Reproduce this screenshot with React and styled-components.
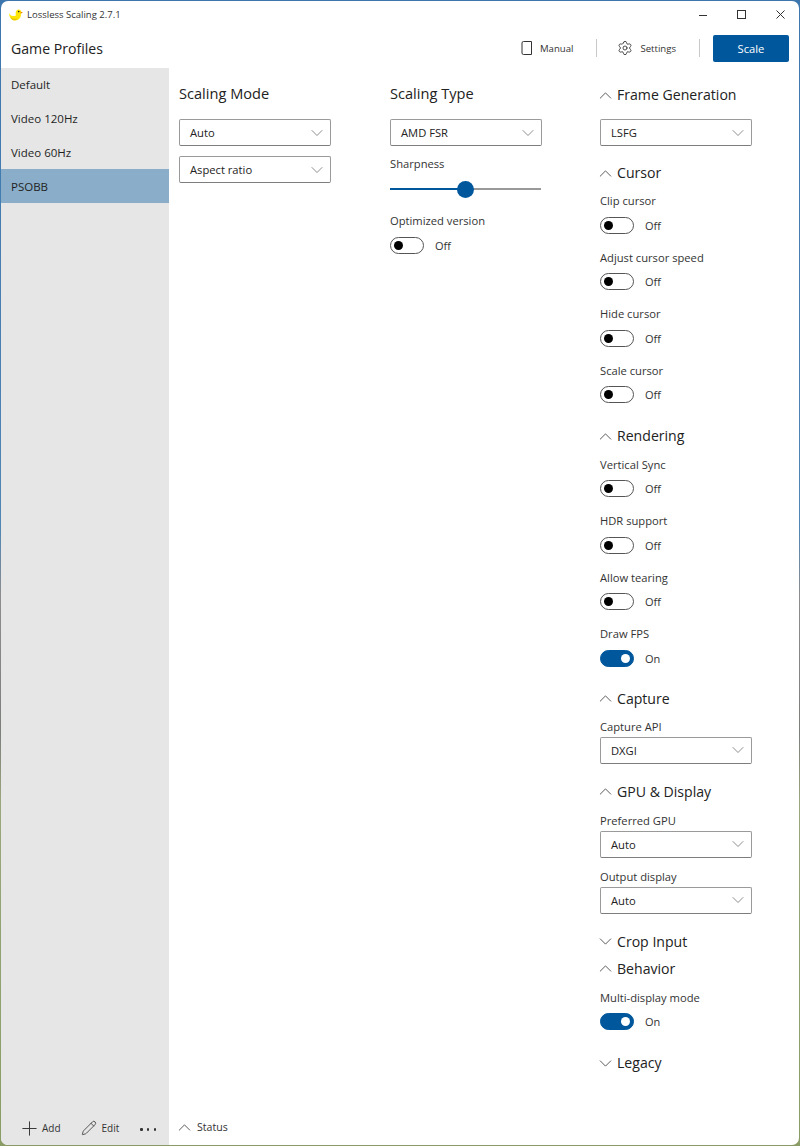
import React from "react";
import styled, { createGlobalStyle } from "styled-components";
import { ChevronDown, ChevronUp, Plus, Pencil, Settings as Gear } from "lucide-react";

const Global = createGlobalStyle`
  html, body { margin: 0; padding: 0; background: #fff; }
  * { box-sizing: border-box; }
`;
const Desktop = styled.div`
  width: 800px;
  height: 1146px;
  padding: 1px;
  background: linear-gradient(#3c76ad 0%, #4f86b5 46%, #8d8d8f 52%, #7d7f7c 64%, #9aa77c 70%, #8a9c66 100%);
`;
const Window = styled.div`
  width: 100%;
  height: 100%;
  background: #fff;
  border-radius: 7px;
  overflow: hidden;
  display: flex;
  flex-direction: column;
  font-family: "Open Sans", "Noto Sans", sans-serif;
  color: #1f1f1f;
`;
const TitleBar = styled.div`
  height: 27px;
  display: flex;
  align-items: center;
  padding-left: 8px;
  font-size: 9.5px;
  color: #333;
  flex-shrink: 0;
`;
const Duck = styled.svg`
  width: 14px;
  height: 12px;
  margin-right: 4px;
`;
const WindowButtons = styled.div`
  margin-left: auto;
  display: flex;
  align-items: center;
  gap: 30px;
  padding-right: 14px;
`;
const Header = styled.div`
  height: 40px;
  display: flex;
  align-items: center;
  padding: 0 10px;
  flex-shrink: 0;
`;
const AppTitle = styled.div`
  font-size: 14.1px;
  color: #222;
`;
const HeaderActions = styled.div`
  margin-left: auto;
  display: flex;
  align-items: center;
`;
const HeaderLink = styled.div`
  display: flex;
  align-items: center;
  gap: ${(p) => p.$gap}px;
  font-size: 9.6px;
  color: #333;
`;
const Divider = styled.div`
  width: 1px;
  height: 18px;
  background: #c8c8c8;
  margin: 0 ${(p) => p.$right}px 0 ${(p) => p.$left}px;
`;
const ScaleButton = styled.div`
  width: 76px;
  height: 27px;
  background: #00579c;
  border-radius: 2px;
  color: #fff;
  font-size: 11.2px;
  display: flex;
  align-items: center;
  justify-content: center;
`;
const Body = styled.div`
  flex: 1;
  display: flex;
  min-height: 0;
`;
const Sidebar = styled.div`
  width: 168px;
  background: #e6e6e6;
  display: flex;
  flex-direction: column;
  flex-shrink: 0;
`;
const ProfileItem = styled.div`
  height: 33.75px;
  display: flex;
  align-items: center;
  padding-left: 10px;
  font-size: 11.5px;
  background: ${(p) => (p.$active ? "#8aaec9" : "transparent")};
`;
const SidebarFooter = styled.div`
  margin-top: auto;
  height: 34px;
  display: flex;
  align-items: center;
  padding-left: 21px;
  font-size: 10px;
  color: #333;
`;
const FooterAction = styled.div`
  display: flex;
  align-items: center;
  gap: ${(p) => p.$gap}px;
  margin-right: ${(p) => p.$space}px;
`;
const AddIcon = styled(Plus)`
  margin: 0 -5px 0 -4px;
`;
const Dots = styled.div`
  display: flex;
  gap: 4.5px;
  margin-top: 3px;
`;
const Dot = styled.span`
  width: 2.2px;
  height: 2.2px;
  border-radius: 50%;
  background: #333;
`;
const Main = styled.div`
  flex: 1;
  display: flex;
  flex-direction: column;
  min-width: 0;
`;
const Columns = styled.div`
  flex: 1;
  display: grid;
  grid-template-columns: 211px 210px 1fr;
  padding: 15px 0 0 10px;
`;
const Column = styled.div`
  display: flex;
  flex-direction: column;
  align-items: flex-start;
`;
const ColumnTitle = styled.div`
  font-size: 14.6px;
  line-height: 22px;
  color: #222;
  margin: -1px 0 15px;
`;
const SectionTitle = styled.div`
  display: flex;
  align-items: center;
  gap: 6px;
  font-size: 14.1px;
  line-height: 22px;
  height: 22px;
  color: #222;
  margin-top: ${(p) => p.$top || 0}px;
`;
const OpenIcon = styled(ChevronUp)`
  margin: 0 -5px 0 -5px;
`;
const ClosedIcon = styled(ChevronDown)`
  margin: 0 -5px 0 -5px;
`;
const Select = styled.div`
  width: 151.5px;
  height: 27px;
  border: 1px solid #9a9a9a;
  border-bottom-color: #7d7d7d;
  border-radius: 2px;
  display: flex;
  align-items: center;
  justify-content: space-between;
  padding: 0 3px 0 10px;
  font-size: 11.2px;
  color: #222;
  flex-shrink: 0;
  margin-top: ${(p) => p.$top || 0}px;
`;
const FieldLabel = styled.div`
  font-size: 11.2px;
  line-height: 15px;
  color: #333;
  margin-top: ${(p) => p.$top || 0}px;
`;
const SwitchRow = styled.div`
  display: flex;
  align-items: center;
  gap: 11px;
  font-size: 11px;
  color: #333;
  margin-top: 8.5px;
`;
const Track = styled.div`
  width: 34px;
  height: 17px;
  border-radius: 9px;
  border: 1px solid ${(p) => (p.$on ? "#00579c" : "#555")};
  background: ${(p) => (p.$on ? "#00579c" : "#fff")};
  display: flex;
  align-items: center;
  justify-content: ${(p) => (p.$on ? "flex-end" : "flex-start")};
  padding: 0 3px;
`;
const Knob = styled.div`
  width: 9px;
  height: 9px;
  border-radius: 50%;
  background: ${(p) => (p.$on ? "#fff" : "#000")};
`;
const Slider = styled.div`
  position: relative;
  width: 151px;
  height: 18px;
  margin-top: 9px;
  display: flex;
  align-items: center;
`;
const SliderFill = styled.div`
  width: 75px;
  height: 2px;
  background: #00579c;
`;
const SliderRest = styled.div`
  flex: 1;
  height: 2px;
  background: #999;
`;
const Thumb = styled.div`
  position: absolute;
  left: 67px;
  top: 0.5px;
  width: 17px;
  height: 17px;
  border-radius: 50%;
  background: #00579c;
`;
const StatusBar = styled.div`
  height: 36px;
  display: flex;
  align-items: center;
  gap: 7px;
  padding-left: 10px;
  font-size: 10.6px;
  color: #333;
  flex-shrink: 0;
`;

const chevron = { size: 21, strokeWidth: 1.1, color: "#555" };

const Dropdown = ({ value, top }) => (
  <Select $top={top}>
    {value}
    <ChevronDown size={20} strokeWidth={1} color="#777" />
  </Select>
);

const Toggle = ({ label, on, top = 16 }) => (
  <>
    <FieldLabel $top={top}>{label}</FieldLabel>
    <SwitchRow>
      <Track $on={on}>
        <Knob $on={on} />
      </Track>
      {on ? "On" : "Off"}
    </SwitchRow>
  </>
);

const Section = ({ title, open = true, top }) => (
  <SectionTitle $top={top}>
    {open ? <OpenIcon {...chevron} /> : <ClosedIcon {...chevron} />}
    {title}
  </SectionTitle>
);

export default function App() {
  return (
    <Desktop>
      <Global />
      <Window>
        <TitleBar>
          <Duck viewBox="0 0 14 12">
            <path d="M0 4c1 2 2 3 4 3 1 0 2-.4 3-.6C6.400 4 6.800 .6 9.500 .5 12 .5 12.800 3 11.800 5c.6 3-1.800 6.500-5.800 6.500C2.500 11.500 .2 8.500 0 4z" fill="#ffe600" />
            <path d="M1.500 7.500c1.500 2.500 5 3 7.500 1.500-1 2-3 2.500-4.500 2.300-1.500-.2-2.500-2-3-3.800z" fill="#e6c200" />
            <path d="M11.500 2.500l2.500 1-2.300 1.200z" fill="#f08a00" />
            <circle cx="9.700" cy="2.600" r=".8" fill="#222" />
          </Duck>
          Lossless Scaling 2.7.1
          <WindowButtons>
            <svg width="8" height="10" viewBox="0 0 8 10"><path d="M0 5.500h8" stroke="#333" /></svg>
            <svg width="9" height="9" viewBox="0 0 9 9"><rect x=".5" y=".5" width="8" height="8" fill="none" stroke="#333" /></svg>
            <svg width="9" height="9" viewBox="0 0 9 9"><path d="M.5 .5l8 8M8.500 .5l-8 8" stroke="#333" /></svg>
          </WindowButtons>
        </TitleBar>
        <Header>
          <AppTitle>Game Profiles</AppTitle>
          <HeaderActions>
            <HeaderLink $gap={7}>
              <svg width="12" height="14" viewBox="0 0 12 14"><path d="M2.500 .5h8v13h-8A1.500 1.500 0 0 1 1 12V2A1.500 1.500 0 0 1 2.500 .5z" fill="none" stroke="#333" /></svg>
              Manual
            </HeaderLink>
            <Divider $left={23} $right={20} />
            <HeaderLink $gap={7}>
              <Gear size={16} strokeWidth={1.3} color="#333" />
              Settings
            </HeaderLink>
            <Divider $left={23} $right={13} />
            <ScaleButton>Scale</ScaleButton>
          </HeaderActions>
        </Header>
        <Body>
          <Sidebar>
            <ProfileItem>Default</ProfileItem>
            <ProfileItem>Video 120Hz</ProfileItem>
            <ProfileItem>Video 60Hz</ProfileItem>
            <ProfileItem $active>PSOBB</ProfileItem>
            <SidebarFooter>
              <FooterAction $gap={6} $space={20}>
                <AddIcon size={23} strokeWidth={1} color="#333" />
                Add
              </FooterAction>
              <FooterAction $gap={5} $space={21}>
                <Pencil size={16} strokeWidth={1.2} color="#333" />
                Edit
              </FooterAction>
              <Dots><Dot /><Dot /><Dot /></Dots>
            </SidebarFooter>
          </Sidebar>
          <Main>
            <Columns>
              <Column>
                <ColumnTitle>Scaling Mode</ColumnTitle>
                <Dropdown value="Auto" />
                <Dropdown value="Aspect ratio" top={10} />
              </Column>
              <Column>
                <ColumnTitle>Scaling Type</ColumnTitle>
                <Dropdown value="AMD FSR" />
                <FieldLabel $top={10}>Sharpness</FieldLabel>
                <Slider>
                  <SliderFill />
                  <SliderRest />
                  <Thumb />
                </Slider>
                <Toggle label="Optimized version" top={15} />
              </Column>
              <Column>
                <Section title="Frame Generation" top={1} />
                <Dropdown value="LSFG" top={13} />
                <Section title="Cursor" top={16} />
                <Toggle label="Clip cursor" top={9} />
                <Toggle label="Adjust cursor speed" />
                <Toggle label="Hide cursor" />
                <Toggle label="Scale cursor" />
                <Section title="Rendering" top={22} />
                <Toggle label="Vertical Sync" top={9.5} />
                <Toggle label="HDR support" />
                <Toggle label="Allow tearing" />
                <Toggle label="Draw FPS" on />
                <Section title="Capture" top={21} />
                <FieldLabel $top={9}>Capture API</FieldLabel>
                <Dropdown value="DXGI" top={3} />
                <Section title="GPU & Display" top={17} />
                <FieldLabel $top={10}>Preferred GPU</FieldLabel>
                <Dropdown value="Auto" top={3} />
                <FieldLabel $top={11}>Output display</FieldLabel>
                <Dropdown value="Auto" top={3} />
                <Section title="Crop Input" open={false} top={17} />
                <Section title="Behavior" top={5} />
                <Toggle label="Multi-display mode" top={10} on />
                <Section title="Legacy" open={false} top={22} />
              </Column>
            </Columns>
            <StatusBar>
              <OpenIcon {...chevron} />
              Status
            </StatusBar>
          </Main>
        </Body>
      </Window>
    </Desktop>
  );
}
